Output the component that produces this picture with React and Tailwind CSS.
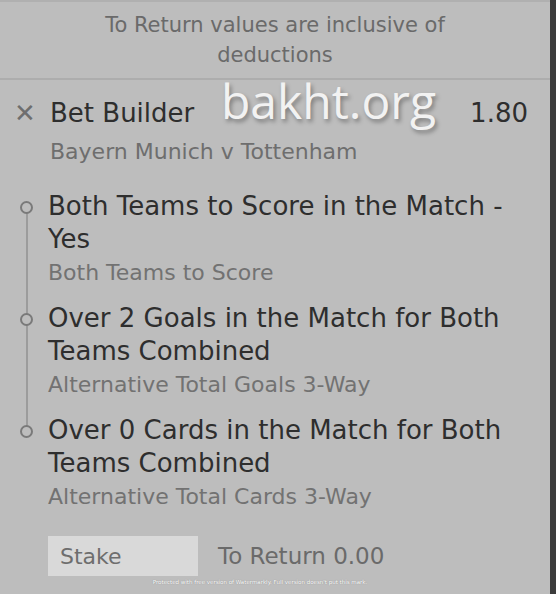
export default function App() {
  const items = [
    { title: "Both Teams to Score in the Match - Yes", sub: "Both Teams to Score" },
    { title: "Over 2 Goals in the Match for Both Teams Combined", sub: "Alternative Total Goals 3-Way" },
    { title: "Over 0 Cards in the Match for Both Teams Combined", sub: "Alternative Total Cards 3-Way" },
  ];
  return (
    <div
      className="relative w-[556px] h-[594px] overflow-hidden bg-[#bdbdbd] flex"
      style={{ fontFamily: '"DejaVu Sans", Verdana, sans-serif' }}
    >
      <div className="flex-1 flex flex-col border-t-2 border-[#b0b0b0]">
        <div className="h-[78px] border-b-2 border-[#adadad] flex items-center justify-center text-center text-[21px] leading-[30px] text-[#6a6a6a] px-[80px]">
          To Return values are inclusive of deductions
        </div>
        <div className="flex items-start pl-[14px] pr-[22px] pt-[18px]">
          <span className="w-[36px] text-[#6e6e6e] text-[26px] leading-[30px]">✕</span>
          <div className="flex-1">
            <div className="text-[26px] leading-[30px] text-[#2e2e2e]">Bet Builder</div>
            <div className="text-[22px] leading-[32px] mt-[8px] text-[#6e6e6e]">Bayern Munich v Tottenham</div>
          </div>
          <span className="text-[26px] leading-[30px] text-[#2e2e2e]">1.80</span>
        </div>
        <div className="relative mt-[22px] pl-[48px] pr-[20px] flex flex-col gap-[13px]">
          <div className="absolute left-[26px] top-[18px] bottom-[81px] w-[2px] bg-[#9c9c9c]" />
          {items.map((it, i) => (
            <div key={i} className="relative">
              <div className="absolute left-[-28px] top-[11px] w-[13px] h-[13px] rounded-full border-2 border-[#7a7a7a] bg-[#bdbdbd]" />
              <div className="text-[26px] leading-[33px] text-[#2e2e2e]">{it.title}</div>
              <div className="text-[22px] leading-[33px] text-[#727272]">{it.sub}</div>
            </div>
          ))}
        </div>
        <div className="flex items-center pl-[48px] mt-[23px] gap-[20px]">
          <div className="w-[150px] h-[40px] bg-[#d9d9d9] text-[#6e6e6e] text-[22px] flex items-center pl-[12px]">Stake</div>
          <div className="text-[23px] text-[#6a6a6a]">To Return 0.00</div>
        </div>
        <div className="text-center text-[5.5px] leading-[8px] text-white mt-[2px] pr-[30px]" style={{ textShadow: "0 0 1px #777" }}>
          Protected with free version of Watermarkly. Full version doesn't put this mark.
        </div>
      </div>
      <div className="w-[6px] bg-[#3c3c3c]" />
      <div
        className="absolute left-[221px] top-[70px] text-[48px] leading-[62px] text-[#f2f2f2]"
        style={{ fontFamily: '"Open Sans", sans-serif', textShadow: "2px 3px 4px rgba(0,0,0,0.35)" }}
      >
        bakht.org
      </div>
    </div>
  );
}
